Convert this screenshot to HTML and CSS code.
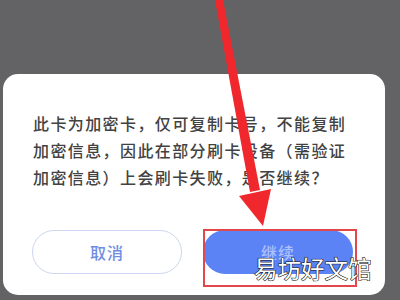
FILE: index.html
```html
<!DOCTYPE html>
<html lang="zh-CN">

<head>
	<meta charset="UTF-8">
	<title>加密卡提示</title>
	<link rel="stylesheet" href="styles.css">
</head>

<body>
	<div class="dialog">
		<p class="message">此卡为加密卡，仅可复制卡号，不能复制加密信息，因此在部分刷卡设备（需验证加密信息）上会刷卡失败，是否继续？</p>
		<div class="actions">
			<button class="btn btn-cancel">取消</button>
			<button class="btn btn-ok">继续</button>
		</div>
	</div>

	<!-- annotation overlays -->
	<div class="mark-box"></div>
	<svg class="arrow" viewBox="0 0 400 300" xmlns="http://www.w3.org/2000/svg">
		<polygon points="215,0 223,0 260,190 250,192" fill="#f0282d" />
		<polygon points="239,196 271,189 263,226" fill="#f0282d" />
	</svg>
	<div class="watermark">易坊好文馆</div>
</body>

</html>
```

FILE: styles.css
```css
html {
	height: 100%;
}

body {
	height: 100%;
	padding: 0;
	margin: 0;
	background: #636365;
	overflow: hidden;
	font-family: "Noto Sans CJK SC", "Noto Sans", sans-serif;
}

.dialog {
	width: 382px;
	height: 221px;
	margin: 74px 0 0 3px;
	padding: 36px 32px 0 30px;
	box-sizing: border-box;
	background: #fff;
	border-radius: 15px;
}

.message {
	margin: 0;
	font-size: 16px;
	font-weight: 500;
	line-height: 27px;
	letter-spacing: 1.4px;
	color: #424242;
}

.actions {
	display: flex;
	gap: 21px;
	margin-top: 39px;
	margin-left: -1px;
}

.btn {
	width: 152px;
	height: 44px;
	border-radius: 22px;
	font-family: inherit;
	font-size: 16px;
	font-weight: 500;
	letter-spacing: 1px;
	padding: 0;
}

.btn-cancel {
	background: #fff;
	border: 1.5px solid #cdd6f0;
	color: #6f8ee2;
}

.btn-ok {
	background: #5b83f6;
	border: none;
	color: rgba(255, 255, 255, 0.5);
}

.mark-box {
	position: absolute;
	left: 203px;
	top: 229px;
	width: 150px;
	height: 54px;
	border: 2px solid #e2474c;
}

.arrow {
	position: absolute;
	left: 0;
	top: 0;
	width: 400px;
	height: 300px;
}

.watermark {
	position: absolute;
	left: 254px;
	top: 252px;
	font-size: 23.5px;
	line-height: 32px;
	color: #fff;
	-webkit-text-stroke: 1px #222;
	paint-order: stroke fill;
	text-shadow: 0 0 1px #000;
}
```
